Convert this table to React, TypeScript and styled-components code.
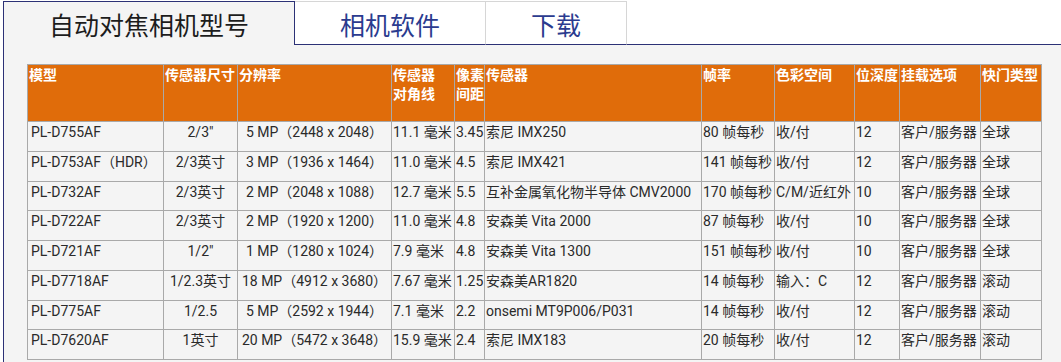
import React from 'react';
import styled, { createGlobalStyle } from 'styled-components';

const GlobalStyle = createGlobalStyle`
  body {
    margin: 0;
    background: #ffffff;
    font-family: Roboto, "Noto Sans CJK SC", sans-serif;
    overflow: hidden;
  }
`;

const Page = styled.div`
  padding-top: 1px;
`;

const TabBar = styled.div`
  display: flex;
  align-items: stretch;
  padding-left: 3px;
`;

const Tab = styled.div<{ active?: boolean }>`
  box-sizing: border-box;
  height: 44px;
  padding: 2px 45px 0;
  font-family: "Noto Sans CJK SC", sans-serif;
  font-size: 25px;
  line-height: 41px;
  white-space: nowrap;
  color: ${p => (p.active ? '#1c1c1c' : '#2b3b8f')};
  background: ${p => (p.active ? '#f4f4f4' : '#ffffff')};
  border-top: 1px solid ${p => (p.active ? '#2c3176' : '#d6d6d6')};
  border-left: ${p => (p.active ? '1px solid #2c3176' : 'none')};
  border-right: 1px solid ${p => (p.active ? '#2c3176' : '#d6d6d6')};
  border-bottom: ${p => (p.active ? 'none' : '1px solid #2c3176')};
  cursor: pointer;
`;

const TabFill = styled.div`
  flex: 1;
  border-bottom: 1px solid #2c3176;
`;

const Panel = styled.div`
  margin-left: 3px;
  border-left: 1px solid #2c3176;
  background: #f4f4f4;
  padding: 19px 0 4px 23px;
`;

const Table = styled.table`
  border-collapse: collapse;
  table-layout: fixed;
  width: 1014px;
  border: 1px solid #a9a9a9;
  font-size: 14px;
  color: #2a2a2a;
`;

const HeadCell = styled.th`
  height: 56px;
  padding: 0 1px;
  background: #e06c0a;
  color: #ffffff;
  font-family: "Noto Sans CJK SC", sans-serif;
  font-weight: 700;
  font-size: 14px;
  line-height: 19px;
  text-align: left;
  vertical-align: top;
  border: 1px solid #a9a9a9;
  white-space: nowrap;
`;

const Cell = styled.td<{ align?: 'left' | 'center'; first?: boolean }>`
  height: 28.75px;
  padding: 0 1px 0 ${p => (p.first ? '3px' : '1px')};
  line-height: 20px;
  text-align: ${p => p.align || 'left'};
  vertical-align: top;
  border: 1px solid #a9a9a9;
  white-space: nowrap;
  overflow: hidden;
`;

const widths = [136, 74, 154, 63, 30, 217, 73, 80, 45, 81, 61];

const headers: string[][] = [
  ['模型'],
  ['传感器尺寸'],
  ['分辨率'],
  ['传感器', '对角线'],
  ['像素', '间距'],
  ['传感器'],
  ['帧率'],
  ['色彩空间'],
  ['位深度'],
  ['挂载选项'],
  ['快门类型'],
];

const rows: string[][] = [
  ['PL-D755AF', '2/3"', '5 MP（2448 x 2048）', '11.1 毫米', '3.45', '索尼 IMX250', '80 帧每秒', '收/付', '12', '客户/服务器', '全球'],
  ['PL-D753AF（HDR）', '2/3英寸', '3 MP（1936 x 1464）', '11.0 毫米', '4.5', '索尼 IMX421', '141 帧每秒', '收/付', '12', '客户/服务器', '全球'],
  ['PL-D732AF', '2/3英寸', '2 MP（2048 x 1088）', '12.7 毫米', '5.5', '互补金属氧化物半导体 CMV2000', '170 帧每秒', 'C/M/近红外', '10', '客户/服务器', '全球'],
  ['PL-D722AF', '2/3英寸', '2 MP（1920 x 1200）', '11.0 毫米', '4.8', '安森美 Vita 2000', '87 帧每秒', '收/付', '10', '客户/服务器', '全球'],
  ['PL-D721AF', '1/2"', '1 MP（1280 x 1024）', '7.9 毫米', '4.8', '安森美 Vita 1300', '151 帧每秒', '收/付', '10', '客户/服务器', '全球'],
  ['PL-D7718AF', '1/2.3英寸', '18 MP（4912 x 3680）', '7.67 毫米', '1.25', '安森美AR1820', '14 帧每秒', '输入：C', '12', '客户/服务器', '滚动'],
  ['PL-D775AF', '1/2.5', '5 MP（2592 x 1944）', '7.1 毫米', '2.2', 'onsemi MT9P006/P031', '14 帧每秒', '收/付', '12', '客户/服务器', '滚动'],
  ['PL-D7620AF', '1英寸', '20 MP（5472 x 3648）', '15.9 毫米', '2.4', '索尼 IMX183', '20 帧每秒', '收/付', '12', '客户/服务器', '滚动'],
];

const tabs = ['自动对焦相机型号', '相机软件', '下载'];

const App: React.FC = () => {
  return (
    <Page>
      <GlobalStyle />
      <TabBar>
        {tabs.map((t, i) => (
          <Tab key={t} active={i === 0}>
            {t}
          </Tab>
        ))}
        <TabFill />
      </TabBar>
      <Panel>
        <Table>
          <colgroup>
            {widths.map((w, i) => (
              <col key={i} style={{ width: w }} />
            ))}
          </colgroup>
          <thead>
            <tr>
              {headers.map((h, i) => (
                <HeadCell key={i}>
                  {h.map((line, j) => (
                    <React.Fragment key={j}>
                      {j > 0 && <br />}
                      {line}
                    </React.Fragment>
                  ))}
                </HeadCell>
              ))}
            </tr>
          </thead>
          <tbody>
            {rows.map((r, i) => (
              <tr key={i}>
                {r.map((c, j) => (
                  <Cell key={j} first={j === 0} align={j === 1 || j === 2 ? 'center' : 'left'}>
                    {c}
                  </Cell>
                ))}
              </tr>
            ))}
          </tbody>
        </Table>
      </Panel>
    </Page>
  );
};

export default App;
